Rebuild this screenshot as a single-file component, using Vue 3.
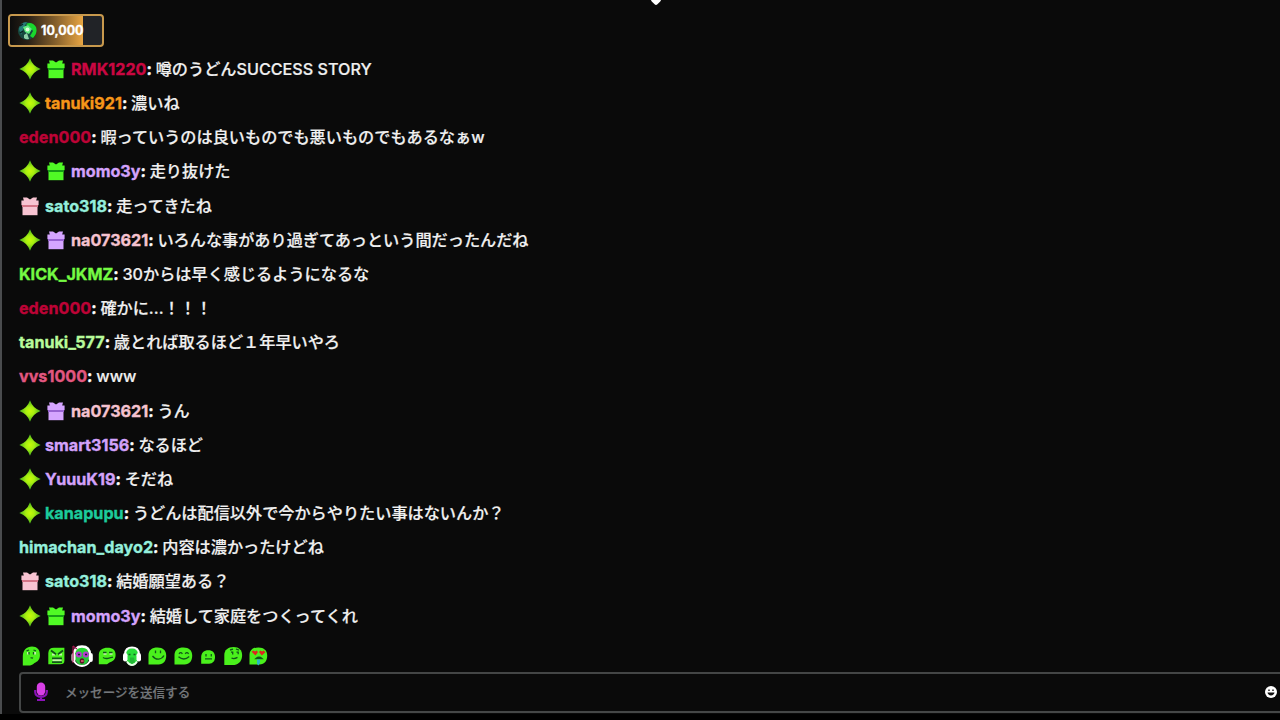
<template>
  <div class="chat">
    <div class="heart"></div>

    <div class="pinned">
      <div class="pinned-gift">
        <svg class="pinned-icon" viewBox="0 0 20 20">
          <circle cx="10" cy="10" r="9" fill="#17483f" />
          <path d="M2 8Q3 1 10 1L7 6 4 14Z" fill="#267c78" />
          <path d="M9 3Q15 0 19 6Q21 12 16 17L13 15 16 10 13 6Z" fill="#19d72d" />
          <path d="M6 6L11 4 15 8 12 13 8 11Z" fill="#5dec80" />
          <circle cx="10.5" cy="8.5" r="2" fill="#dcffd8" />
          <path d="M7 14L10 12 12 18Q9 19 7 17Z" fill="#8fd0a8" />
          <path d="M3 5L6 3M3 12L6 10" stroke="#08221f" stroke-width="1.4" />
        </svg>
        <span>10,000</span>
      </div>
    </div>

    <div class="messages">
      <div v-for="(m, i) in messages" :key="i" class="message">
        <svg v-if="m.star" class="badge" viewBox="0 0 22 22">
          <defs>
            <radialGradient :id="'star' + i">
              <stop offset="0" stop-color="#c4fc08" />
              <stop offset="0.4" stop-color="#a8ee10" />
              <stop offset="1" stop-color="#3fae1c" />
            </radialGradient>
          </defs>
          <path d="M11 .3Q13.6 8.2 21.7 11Q13.6 13.8 11 21.7Q8.4 13.8.3 11Q8.4 8.2 11 .3Z" :fill="`url(#star${i})`" />
        </svg>
        <svg v-if="m.gift" class="badge" viewBox="0 0 22 22">
          <path d="M4 2.4H8L11 4.4 14 2.4H18L17.2 5.6H19.6V10.2H2.4V5.6H4.8Z" :fill="gifts[m.gift][0]" />
          <path d="M3.5 10H18.5V20.2H3.5Z" :fill="gifts[m.gift][0]" />
          <path d="M3 10H19V12H3Z" :fill="gifts[m.gift][1]" />
        </svg>
        <span class="name" :style="{ color: m.color }">{{ m.name }}</span><span class="colon">:</span>
        <span class="text">{{ m.text }}</span>
      </div>
    </div>

    <div class="emotes">
      <svg v-for="e in emotes" :key="e" class="emote" viewBox="0 0 22 22">
        <template v-if="e === 'headset'">
          <path d="M3 10Q3 1.5 11 1.5T19 10" fill="#25d832" stroke="#fff" stroke-width="2.4" />
          <path d="M4 8H18V14Q16 20 11 20T4 14Z" fill="#27c83a" />
          <rect x=".5" y="8" width="4" height="9" rx="2" fill="#fff" />
          <rect x="17.8" y="8" width="4" height="9" rx="2" fill="#fff" />
          <path d="M2 1V18M2 1L6 4" stroke="#a11650" stroke-width="1.2" />
          <circle cx="7.8" cy="9.5" r="3" fill="#b23fd0" />
          <circle cx="14.8" cy="9.5" r="3" fill="#b23fd0" />
          <path d="M7 9.5H9M14 9.5H16" stroke="#28103a" stroke-width="1.5" />
          <path d="M3 16Q6 21 11 21T19 16" fill="none" stroke="#fff" stroke-width="1.8" />
          <ellipse cx="11" cy="16" rx="2.3" ry="2.8" fill="#5b1424" />
          <path d="M10 16H12.6" stroke="#e6647b" stroke-width="1.5" />
        </template>
        <template v-else-if="e === 'headphones'">
          <path d="M4.5 10Q4.5 3 11 3T17.5 10V15Q15 20.5 11 20.5T4.5 15Z" fill="#2ade3b" />
          <path d="M4 9Q4.5 2.5 11 2.5T18 9" fill="none" stroke="#fff" stroke-width="2" />
          <rect x="2" y="8" width="4.5" height="8.5" rx="2.2" fill="#fff" />
          <rect x="15.5" y="8" width="4.5" height="8.5" rx="2.2" fill="#fff" />
          <path d="M7.5 9.5H9.5M12.5 9.5H14.5" stroke="#135c22" stroke-width="1.6" />
          <path d="M6 16.5Q8 20 11 20T16 16.5" fill="none" stroke="#e8ffe8" stroke-width="1.8" />
          <path d="M9 12.5H13L14 17 11 19 8.5 17Z" fill="#22b836" />
        </template>
        <template v-else>
          <path :d="blobs[e].body" fill="#4af01c" />
          <path v-if="blobs[e].white" :d="blobs[e].white" fill="#c4f5a8" />
          <path :d="blobs[e].face" fill="none" stroke="#12551a" :stroke-width="e === 'angry' ? 1.8 : 1.3" />
          <template v-if="e === 'love'">
            <path d="M4.6 6.8L6.5 5.6 8 6.5 9.6 5.5 11 7 8.5 10.5ZM12 7L13.4 5.5 15 6.5 16.8 5.6 18.4 7.2 14.8 10.5Z" fill="#e0241f" />
            <path d="M10 14.5H13V18L11.5 20.5 10 19Z" fill="#28b8c4" />
          </template>
        </template>
      </svg>
    </div>

    <div class="input">
      <svg class="mic" viewBox="0 0 14 20">
        <path d="M1.2 8V10Q1.5 14.8 7 14.8T12.8 10V8M7 14V18M3 18H11" fill="none" stroke="#8b12b8" stroke-width="2.2" />
        <rect x="2.8" y=".5" width="8.4" height="13" rx="4.2" fill="#d83fe6" />
      </svg>
      <span class="placeholder">メッセージを送信する</span>
      <svg class="smiley" viewBox="0 0 12 12">
        <circle cx="6" cy="6" r="6" fill="#fff" />
        <path d="M3.3 3.5H4.7V5H3.3ZM7.3 3.5H8.7V5H7.3ZM2.5 6.6H9.5Q9 9.4 6 9.4T2.5 6.6Z" fill="#111" />
      </svg>
    </div>
  </div>
</template>

<script setup>
// バッジの色 [本体, リボンの影]
const gifts = {
  green: ['#50fa25', '#169c16'],
  pink: ['#f8c4d2', '#d47587'],
  purple: ['#d5a5ff', '#9862d2'],
};

const messages = [
  { star: true, gift: 'green', name: 'RMK1220', color: '#c90742', text: '噂のうどんSUCCESS STORY' },
  { star: true, name: 'tanuki921', color: '#f69619', text: '濃いね' },
  { name: 'eden000', color: '#bd0336', text: '暇っていうのは良いものでも悪いものでもあるなぁw' },
  { star: true, gift: 'green', name: 'momo3y', color: '#d3a2fb', text: '走り抜けた' },
  { gift: 'pink', name: 'sato318', color: '#94efdc', text: '走ってきたね' },
  { star: true, gift: 'purple', name: 'na073621', color: '#f5c2cf', text: 'いろんな事があり過ぎてあっという間だったんだね' },
  { name: 'KICK_JKMZ', color: '#75fa43', text: '30からは早く感じるようになるな' },
  { name: 'eden000', color: '#bd0336', text: '確かに...！！！' },
  { name: 'tanuki_577', color: '#b8fb9b', text: '歳とれば取るほど１年早いやろ' },
  { name: 'vvs1000', color: '#e25780', text: 'www' },
  { star: true, gift: 'purple', name: 'na073621', color: '#f5c2cf', text: 'うん' },
  { star: true, name: 'smart3156', color: '#d3a2fb', text: 'なるほど' },
  { star: true, name: 'YuuuK19', color: '#d3a2fb', text: 'そだね' },
  { star: true, name: 'kanapupu', color: '#1ccb9b', text: 'うどんは配信以外で今からやりたい事はないんか？' },
  { name: 'himachan_dayo2', color: '#94efdc', text: '内容は濃かったけどね' },
  { gift: 'pink', name: 'sato318', color: '#94efdc', text: '結婚願望ある？' },
  { star: true, gift: 'green', name: 'momo3y', color: '#d3a2fb', text: '結婚して家庭をつくってくれ' },
];

const emotes = ['tall', 'angry', 'headset', 'smug', 'headphones', 'smile', 'happy', 'small', 'think', 'love'];

const round = 'M2.5 19.6V10C2.5 5 6 2.4 11.5 2.4C17 2.4 20.2 5.5 20.2 10.5C20.2 16 17.5 19 12.5 19.6Z';

// 左下が角になった緑のキャラ
const blobs = {
  tall: {
    body: 'M2.8 20.6V11C3.2 5 6.5 1.6 12 1.6C17 1.6 19.9 4.5 19.9 10C19.9 15 17.5 16.5 14.5 18C12.5 20 10.5 20.6 8.5 20.6Z',
    white: 'M7 7H9V9.5H7ZM14 7H16V9.5H14Z',
    face: 'M6.5 5.8L9 5M13.5 5L16 5.8M9 7V9.5M13.5 7V9.5M10.5 13Q11.5 12.5 13 13.2',
  },
  angry: {
    body: 'M3.3 19.2V8Q3.5 2.8 9 2.8H19.4V16Q19.4 19.2 15 19.2Z',
    white: 'M7 8.5H10V10.5H7ZM14 8.5H17V10.5H14ZM7.5 14H16.5V16.5H7.5Z',
    face: 'M6 5.5L11 9.2M18 5.5L13 9.2M7 13.3H17M7 17.2H17',
  },
  smug: {
    body: 'M2.8 19.2V9.5C3.2 5 6.5 2.8 11.5 2.8C16.8 2.8 19.6 5 19.6 9.8C19.6 14.5 17 16.5 13.5 17.5L11 19.2Z',
    white: 'M7.5 8H10.5V9.8H7.5ZM13.5 8H16.5V9.8H13.5Z',
    face: 'M7 7.5H10.5M13 7.5H16.5M7 12.5Q9 14 12 13.3T17 12.2',
  },
  smile: { body: round, face: 'M9.5 5.5V8.3M14.5 5.5V8.3M6.5 11Q9 14.3 12.5 14.1T18 10.5' },
  happy: { body: round, face: 'M7 8.8Q8.7 6.5 10.4 8.8M13.2 8.8Q14.9 6.5 16.6 8.8M6.5 11.8Q12 16.3 17.2 11.6' },
  small: {
    body: 'M4.2 18.8V12C4.2 7.6 7 5.2 11.3 5.2C15.6 5.2 18 7.6 18 12C18 16.3 15.8 18.4 12 18.8Z',
    face: 'M9 9V11.5M14.3 9V11.5M8 13.8H15',
  },
  think: {
    body: 'M2.3 20V10C2.3 5 6 2 11.5 2C17 2 20.1 5 20.1 10C20.1 15.5 17.5 19 12.5 20Z',
    face: 'M8 5L11 4.2M14 4L17 5.2M9 7.2H10.7V9.5M14.5 7.2H16.2V9.2M9.5 13Q12 14.3 15.5 12.4',
  },
  love: { body: round, face: 'M9 13.5Q12 11 15 13.5Z' },
};
</script>

<style>
body {
  margin: 0;
  background: #000;
}
</style>

<style scoped>
.chat {
  position: relative;
  box-sizing: border-box;
  width: 1280px;
  height: 714px;
  padding: 14px 0 0 6px;
  border-left: 2px solid #4a4c4e;
  background: #0a0a0a;
  overflow: hidden;
  font-family: Inter, "Noto Sans CJK JP", sans-serif;
}

.heart {
  position: absolute;
  top: -4px;
  left: 650px;
  width: 8px;
  height: 8px;
  border-radius: 2px;
  background: #fff;
  transform: rotate(45deg);
}

.pinned {
  box-sizing: border-box;
  width: 96px;
  height: 33px;
  border: 2px solid #c8994d;
  border-radius: 4px;
  background: #212327;
  overflow: hidden;
}

.pinned-gift {
  display: flex;
  align-items: center;
  gap: 4px;
  box-sizing: border-box;
  width: 73px;
  height: 29px;
  padding-left: 7px;
  background: linear-gradient(90deg, #0d0d0d 0%, #2a2117 25%, #8b642d 65%, #e9a643 100%);
  color: #fff;
  font-size: 12.5px;
  font-weight: 700;
  -webkit-text-stroke: 0.3px currentColor;
}

.pinned-icon {
  flex: none;
  width: 20px;
  height: 20px;
}

.messages {
  margin-top: 4.8px;
  padding-left: 11px;
}

.message {
  display: flex;
  align-items: center;
  height: 34.18px;
  font-size: 16.17px;
  line-height: 24px;
  white-space: nowrap;
}

.badge {
  flex: none;
  width: 22px;
  height: 22px;
  margin-right: 4px;
}

.name,
.colon {
  font-weight: 700;
  -webkit-text-stroke: 0.35px currentColor;
}

.colon {
  color: #fff;
}

.text {
  margin-left: 3.8px;
  color: #f0f0f0;
  font-weight: 500;
  -webkit-text-stroke: 0.2px currentColor;
}

.emotes {
  display: flex;
  gap: 3.25px;
  margin-top: 12.2px;
  padding-left: 12px;
}

.emote {
  width: 22px;
  height: 22px;
}

.input {
  display: flex;
  align-items: center;
  box-sizing: border-box;
  width: 1290px;
  height: 41px;
  margin: 5px 0 0 11px;
  padding-left: 13px;
  border: 2px solid #444646;
  border-radius: 4px;
}

.mic {
  width: 14px;
  height: 20px;
}

.placeholder {
  margin-left: 17px;
  padding-bottom: 1px;
  color: #74777b;
  font-size: 12.55px;
  font-weight: 500;
  -webkit-text-stroke: 0.2px currentColor;
}

.smiley {
  width: 12px;
  height: 12px;
  margin-left: auto;
  margin-right: 30px;
}
</style>
